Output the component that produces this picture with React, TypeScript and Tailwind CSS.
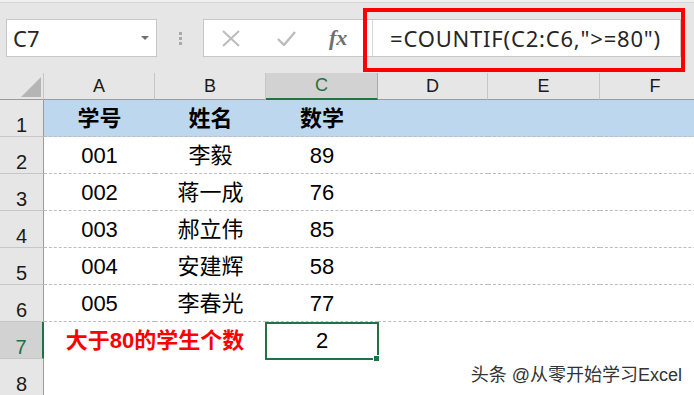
import React from "react";

const cols = ["A", "B", "C", "D", "E", "F"];

const rows: { a: string; b: string; c: string }[] = [
  { a: "001", b: "李毅", c: "89" },
  { a: "002", b: "蒋一成", c: "76" },
  { a: "003", b: "郝立伟", c: "85" },
  { a: "004", b: "安建辉", c: "58" },
  { a: "005", b: "李春光", c: "77" },
];

function RowHead({ n, active }: { n: number; active?: boolean }) {
  return (
    <div
      className={
        active
          ? "flex items-end justify-center pb-[1px] bg-[#d2d2d2] border-b border-[#c6c6c6] border-r-2 border-r-[#217346] text-[#217346] text-[20px] leading-[20px]"
          : "flex items-end justify-center pb-[1px] bg-[#e6e6e6] border-b border-[#c6c6c6] border-r border-r-[#9b9b9b] text-[#1a1a1a] text-[20px] leading-[20px]"
      }
    >
      {n}
    </div>
  );
}

const dashed = "border-b border-dashed border-[#bdbdbd]";

export default function App() {
  return (
    <div className="relative w-[694px] h-[395px] overflow-hidden bg-white font-['Liberation_Sans','Noto_Sans_CJK_SC',sans-serif]">
      {/* Toolbar */}
      <div className="h-[73px] bg-[#e6e6e6] flex flex-col">
        <div className="h-[3px] bg-[#f0f0f0] border-b border-[#d5d5d5]" />
        <div className="flex items-start pt-[16px] pl-[6px] pr-[13px]">
          <div className="relative w-[151px] h-[38px] bg-white border border-[#c6c6c6] flex items-center pl-[6px] font-['Noto_Sans',sans-serif] text-[22px] text-[#262626]">
            C7
            <svg className="absolute left-[134px] top-[16px]" width="8" height="4" viewBox="0 0 8 4">
              <polygon points="0,0 8,0 4,4" fill="#6f6f6f" />
            </svg>
          </div>
          <div className="w-[46px] h-[38px] flex flex-col items-center justify-center gap-[2px]">
            <div className="w-[3px] h-[3px] bg-[#a9a9a9]" />
            <div className="w-[3px] h-[3px] bg-[#a9a9a9]" />
            <div className="w-[3px] h-[3px] bg-[#a9a9a9]" />
          </div>
          <div className="flex-1 h-[38px] bg-white border border-[#c6c6c6] flex items-center">
            <div className="w-[168px] h-full flex items-center">
              <svg className="ml-[18px]" width="18" height="17" viewBox="0 0 18 17">
                <path d="M1 1 L17 16 M17 1 L1 16" stroke="#bcbcbc" strokeWidth="2" fill="none" />
              </svg>
              <svg className="ml-[37px]" width="19" height="15" viewBox="0 0 19 15">
                <path d="M1 8 L7 14 L18 1" stroke="#bcbcbc" strokeWidth="2.4" fill="none" />
              </svg>
              <span className="ml-[33px] font-['Liberation_Serif',serif] italic font-bold text-[22px] text-[#707070] leading-none">
                fx
              </span>
            </div>
            <div className="h-full flex-1 border-l border-[#d8d8d8] flex items-center pl-[17px] font-['Noto_Sans',sans-serif] text-[22px] tracking-[0.8px] text-[#262626] whitespace-nowrap">
              =COUNTIF(C2:C6,"&gt;=80")
            </div>
          </div>
        </div>
      </div>

      {/* Red annotation box */}
      <div className="absolute left-[363px] top-[8px] w-[322px] h-[64px] border-4 border-[#ff0000]" />

      {/* Sheet */}
      <div className="grid grid-cols-[44px_111px_111px_112px_110px_112px_111px] grid-rows-[27px_repeat(8,37px)] w-[711px]">
        {/* Column header row */}
        <div className="relative bg-[#e6e6e6] border-b border-[#9b9b9b] border-r border-r-[#c6c6c6]">
          <svg className="absolute left-[21px] top-[4px]" width="20" height="20" viewBox="0 0 20 20">
            <polygon points="0,20 20,20 20,0" fill="#b5b5b5" />
          </svg>
        </div>
        {cols.map((c) =>
          c === "C" ? (
            <div
              key={c}
              className="flex items-center justify-center bg-[#d2d2d2] border-b-2 border-[#217346] border-r border-r-[#ababab] text-[18px] text-[#217346]"
            >
              {c}
            </div>
          ) : (
            <div
              key={c}
              className="flex items-center justify-center bg-[#e6e6e6] border-b border-[#9b9b9b] border-r border-r-[#c6c6c6] text-[18px] text-[#1a1a1a]"
            >
              {c}
            </div>
          )
        )}

        {/* Row 1 */}
        <RowHead n={1} />
        <div className={`flex items-center justify-center bg-[#bdd7ee] font-bold text-[22px] ${dashed}`}>学号</div>
        <div className={`flex items-center justify-center bg-[#bdd7ee] font-bold text-[22px] ${dashed}`}>姓名</div>
        <div className={`flex items-center justify-center bg-[#bdd7ee] font-bold text-[22px] ${dashed}`}>数学</div>
        <div className={`bg-[#bdd7ee] ${dashed}`} />
        <div className={`bg-[#bdd7ee] ${dashed}`} />
        <div className={`bg-[#bdd7ee] ${dashed}`} />

        {/* Rows 2-6 */}
        {rows.map((r, i) => (
          <React.Fragment key={r.a}>
            <RowHead n={i + 2} />
            <div className={`flex items-center justify-center text-[22px] text-black ${dashed}`}>{r.a}</div>
            <div className={`flex items-center justify-center text-[22px] text-black ${dashed}`}>{r.b}</div>
            <div className={`flex items-center justify-center text-[22px] text-black ${dashed}`}>{r.c}</div>
            <div className={dashed} />
            <div className={dashed} />
            <div className={dashed} />
          </React.Fragment>
        ))}

        {/* Row 7 */}
        <RowHead n={7} active />
        <div className="col-span-2 flex items-center justify-center font-bold text-[22px] text-[#ff0000]">
          大于80的学生个数
        </div>
        <div className="relative flex items-center justify-center text-[22px] text-black">
          2
          <div className="absolute left-[-1px] right-[-1px] top-0 bottom-[-1px] border-2 border-[#217346]" />
          <div className="absolute right-[-2px] bottom-[-3px] w-[7px] h-[7px] bg-[#217346] border border-white" />
        </div>
        <div />
        <div />
        <div />

        {/* Row 8 */}
        <RowHead n={8} />
        <div />
        <div />
        <div />
        <div />
        <div />
        <div />
      </div>

      {/* Watermark */}
      <div className="absolute right-[12px] bottom-[11px] text-[18px] leading-[18px] text-[#333333] whitespace-nowrap">
        头条 @从零开始学习Excel
      </div>
    </div>
  );
}
